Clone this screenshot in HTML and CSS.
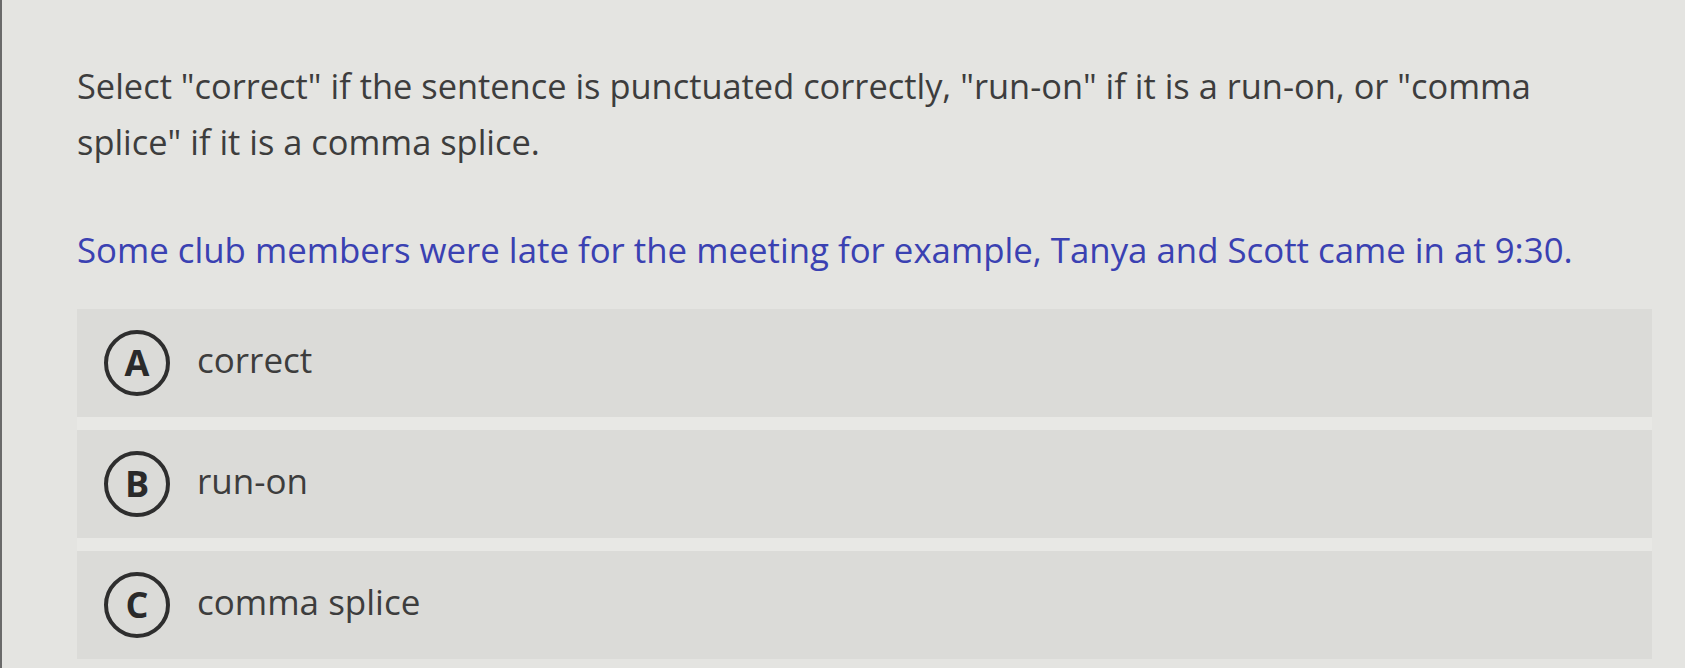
FILE: index.html
```html
<!DOCTYPE html>
<html lang="en">
<head>
<meta charset="utf-8">
<title>Question</title>
<link rel="stylesheet" href="styles.css">
</head>
<body>
<main class="page">
  <p class="prompt">Select "correct" if the sentence is punctuated correctly, "run-on" if it is a run-on, or "comma splice" if it is a comma splice.</p>
  <p class="sentence">Some club members were late for the meeting for example, Tanya and Scott came in at 9:30.</p>
  <div class="options">
    <div class="option"><span class="badge">A</span><span class="label">correct</span></div>
    <div class="option"><span class="badge">B</span><span class="label">run-on</span></div>
    <div class="option"><span class="badge">C</span><span class="label">comma splice</span></div>
  </div>
</main>
</body>
</html>
```

FILE: styles.css
```css
html, body {
  margin: 0;
  padding: 0;
}

body {
  background: #e4e4e1;
  box-shadow: inset 2px 0 0 #6a6a6a;
  font-family: "Open Sans", "Liberation Sans", sans-serif;
  color: #3d3d3d;
  height: 668px;
  overflow: hidden;
}

.page {
  padding: 58px 0 0 77px;
}

.prompt {
  margin: 0;
  width: 1500px;
  font-size: 34.4px;
  line-height: 56px;
}

.sentence {
  margin: 52px 0 0 0;
  white-space: nowrap;
  font-size: 34.8px;
  line-height: 56px;
  color: #3a41b2;
}

.options {
  margin-top: 31px;
  width: 1575px;
  display: flex;
  flex-direction: column;
  gap: 13px;
  background: #e8e8e5;
}

.option {
  height: 108px;
  background: #dbdbd8;
  display: flex;
  align-items: center;
  padding-left: 27px;
  gap: 27px;
}

.badge {
  box-sizing: border-box;
  width: 66px;
  height: 66px;
  border: 4px solid #2e2e2e;
  border-radius: 50%;
  display: flex;
  align-items: center;
  justify-content: center;
  font-size: 36px;
  font-weight: 700;
  color: #2a2a2a;
  line-height: 1;
}

.label {
  font-size: 35px;
  line-height: 46px;
  color: #3d3d3d;
  padding-bottom: 6px;
}
```
